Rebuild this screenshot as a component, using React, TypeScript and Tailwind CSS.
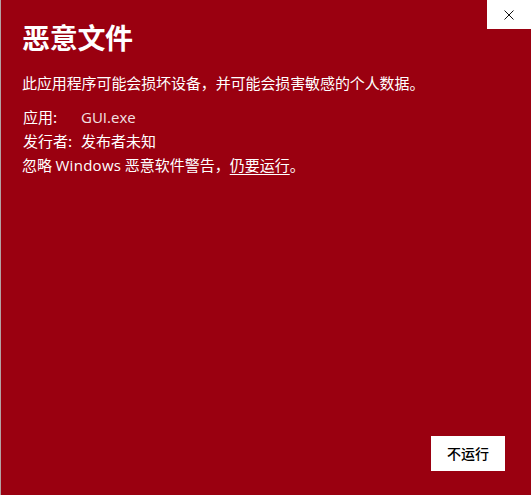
import React from "react";

const font = { fontFamily: '"Noto Sans CJK SC", "Open Sans", sans-serif' };
const latin = { fontFamily: '"Open Sans", "Noto Sans CJK SC", sans-serif' };

export default function App() {
  return (
    <div
      className="relative flex h-[495px] w-[531px] flex-col overflow-hidden border-l border-[#b4a0a3] bg-[#9a0010] text-white"
      style={font}
    >
      <button className="absolute right-0 top-0 flex h-[29px] w-[44px] items-center justify-center bg-white">
        <svg width="10" height="10" viewBox="0 0 10 10">
          <path d="M0.5 0.5 L9.5 9.5 M9.5 0.5 L0.5 9.5" stroke="#111" strokeWidth="1" />
        </svg>
      </button>

      <div className="flex flex-col pl-[21px] pt-[17px]">
        <h1 className="text-[28px] font-bold leading-[40px] tracking-[-0.3px]">恶意文件</h1>
        <p className="mt-[16px] text-[15px] leading-[20px] tracking-[-0.1px]">
          此应用程序可能会损坏设备，并可能会损害敏感的个人数据。
        </p>
        <div className="mt-[12px] flex flex-col text-[15px] leading-[24px]">
          <div className="flex pl-[1px]">
            <span className="w-[58px]">应用:</span>
            <span className="text-[#f3e0e3]" style={latin}>GUI.exe</span>
          </div>
          <div className="flex pl-[1px]">
            <span className="w-[58px]">发行者:</span>
            <span>发布者未知</span>
          </div>
          <div className="flex">
            <span>
              忽略{" "}
              <span className="tracking-[0.3px]" style={latin}>Windows</span>{" "}
              恶意软件警告，<span className="underline underline-offset-[3px]">仍要运行</span>。
            </span>
          </div>
        </div>
      </div>

      <div className="flex flex-1 items-end justify-end pb-[24px] pr-[26px]">
        <button className="flex h-[35px] w-[74px] items-center justify-center bg-white text-[14px] font-medium text-black">
          不运行
        </button>
      </div>
    </div>
  );
}
